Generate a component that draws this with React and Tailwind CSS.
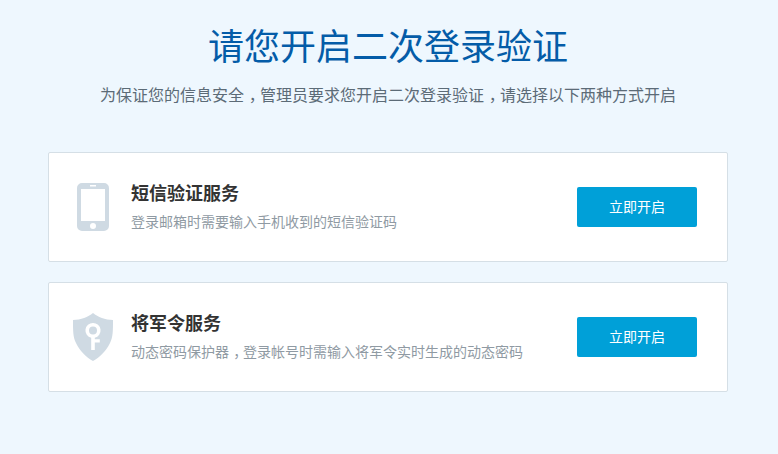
const CJK = "font-['Microsoft_YaHei','Noto_Sans_CJK_SC',sans-serif]";

// the reference font sets the full-width comma nearer the middle of its cell
function Comma() {
  return <span className="ml-[0.3em] mr-[0.2em] [font-feature-settings:'halt']">，</span>;
}

function PhoneIcon() {
  return (
    <svg width="32" height="48" viewBox="0 0 32 48" className="block">
      <path
        fillRule="evenodd"
        fill="#cfdae3"
        d="M5 0h22a5 5 0 0 1 5 5v38a5 5 0 0 1-5 5H5a5 5 0 0 1-5-5V5a5 5 0 0 1 5-5zM4 6v32h24V6zM13 2h6v1.500h-6zM16 40a3 3 0 1 0 0 6a3 3 0 0 0 0-6z"
      />
    </svg>
  );
}

function ShieldIcon() {
  return (
    <svg width="40" height="48" viewBox="0 0 40 48" className="block">
      <path
        fillRule="evenodd"
        fill="#cfdae3"
        d="M20 0C25 4 32 7 40 7C40 18 40 24 37 30C33 38 27 44 20 48C13 44 7 38 3 30C0 24 0 18 0 7C8 7 15 4 20 0zM20 10a7.500 7.500 0 0 0-1.800 14.800V37h3.600V29.500h5v-3.200h-5v-1.500A7.500 7.500 0 0 0 20 10zM20 13.500a4 4 0 1 1 0 8a4 4 0 0 1 0-8z"
      />
    </svg>
  );
}

function ServiceCard({ icon, title, desc }) {
  return (
    <div className="flex h-[110px] items-center rounded-[2px] border border-[#d5dfe6] bg-white pl-6 pr-[30px]">
      <div className="flex w-10 justify-center">{icon}</div>
      <div className="mb-1 ml-[18px] flex-1">
        <h3 className="text-[18px] font-bold leading-6 text-[#333]">{title}</h3>
        <p className="mt-[7px] text-[14px] leading-5 text-[#8f9aa3]">{desc}</p>
      </div>
      <button className="h-10 w-[120px] rounded-[2px] bg-[#00a0d8] pb-[2px] text-[14px] text-white">立即开启</button>
    </div>
  );
}

export default function App() {
  return (
    <div className={`${CJK} h-[454px] w-[778px] overflow-hidden bg-[#eef7fe] pl-12 pt-[17px]`}>
      <div className="w-[680px]">
        <h1 className="text-center text-[36px] font-normal leading-[54px] text-[#045ca8]">请您开启二次登录验证</h1>
        <p className="mt-[11px] text-center text-[16px] leading-6 text-[#5c6b77]">
          为保证您的信息安全<Comma />管理员要求您开启二次登录验证<Comma />请选择以下两种方式开启
        </p>
        <div className="mt-[46px] flex flex-col gap-5">
          <ServiceCard icon={<PhoneIcon />} title="短信验证服务" desc="登录邮箱时需要输入手机收到的短信验证码" />
          <ServiceCard
            icon={<ShieldIcon />}
            title="将军令服务"
            desc={<>动态密码保护器<Comma />登录帐号时需输入将军令实时生成的动态密码</>}
          />
        </div>
      </div>
    </div>
  );
}
